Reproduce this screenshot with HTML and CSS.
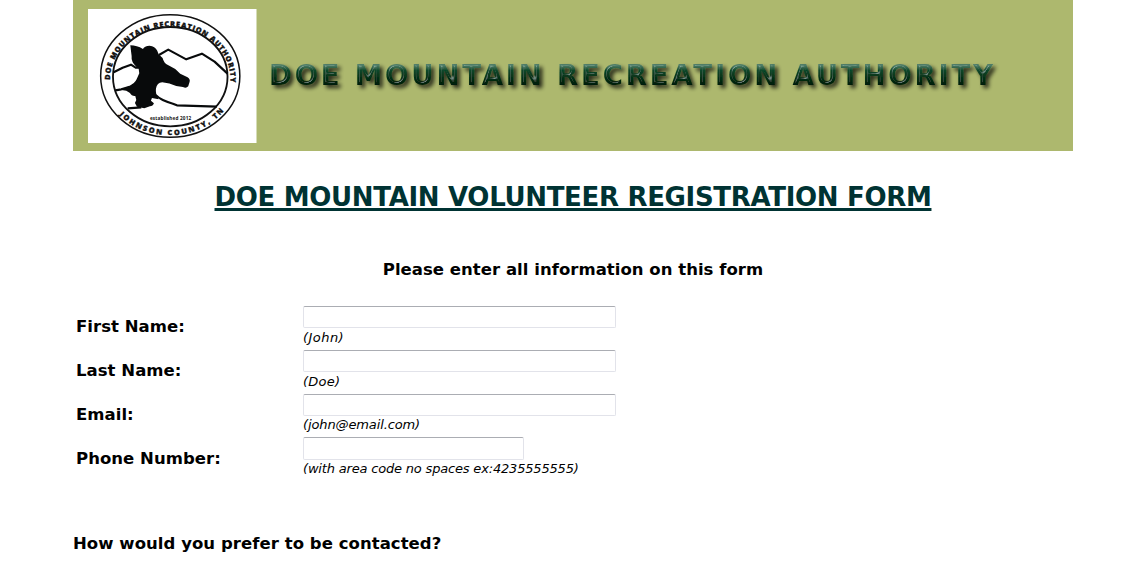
FILE: index.html
```html
<!DOCTYPE html>
<html lang="en">
<head>
<meta charset="utf-8">
<title>Doe Mountain Volunteer Registration</title>
<link rel="stylesheet" href="styles.css">
</head>
<body>
<div class="page">
  <header class="banner">
    <svg class="logo" viewBox="45 27 506 402" preserveAspectRatio="none" role="img" aria-label="Doe Mountain Recreation Authority seal">
      <defs>
        <path id="arc-top" d="M111 240 A181 160 0 1 1 473 240 L473 262"/>
        <path id="arc-bottom" d="M139 344 A200 177 0 0 0 451 335"/>
      </defs>
      <rect x="45" y="27" width="506" height="402" fill="#fff"/>
      <g fill="none" stroke="#111" stroke-width="4.5">
        <ellipse cx="292" cy="228" rx="209" ry="184"/>
        <ellipse cx="292" cy="230" rx="172" ry="149" stroke-width="5.5"/>
      </g>
      <g fill="none" stroke="#080a0b" stroke-width="6.5" stroke-linejoin="round">
        <path d="M122 217 L149 203 L174 194 L188 203 L200 203"/>
        <path d="M258 165 L286 149 L340 178 L387 161 L425 185 L464 221"/>
        <path d="M127 271 L145 268 L170 260"/>
        <path d="M248 285 Q262 300 300 311 L312 316 L432 320"/>
        <path d="M164 325 L205 322"/>
      </g>
      <path fill="#080a0b" d="M172 136 Q192 136 210 147 Q214 138 230 137 Q246 138 253 152 L257 163 L269 174 Q273 190 285 195 L307 207 L322 221 L344 232 Q353 238 350 246 L346 259 Q340 266 330 261 L310 258 Q290 249 268 247 Q252 248 249 266 Q247 282 257 298 L237 294 L234 302 L243 310 Q240 319 231 319 L214 325 L192 320 L186 309 L190 300 L187 288 Q176 289 171 279 L160 272 L140 269 L165 260 Q187 249 191 238 L199 220 L197 205 L190 200 Q174 186 176 168 Z"/>
      <g class="seal-text">
        <text class="seal-ring" font-size="22"><textPath href="#arc-top" textLength="543">DOE MOUNTAIN RECREATION AUTHORITY</textPath></text>
        <text class="seal-ring" font-size="22"><textPath href="#arc-bottom" textLength="352">JOHNSON COUNTY, TN</textPath></text>
        <text class="established" x="231" y="359" font-size="14" textLength="124">established 2012</text>
      </g>
    </svg>
    <svg class="wordmark" viewBox="0 0 740 50" role="img" aria-label="Doe Mountain Recreation Authority">
      <defs>
        <linearGradient id="bevel" x1="0" y1="0" x2="0" y2="1">
          <stop offset="0.2" stop-color="#4f7c66"/>
          <stop offset="0.36" stop-color="#11472a"/>
          <stop offset="0.58" stop-color="#053217"/>
          <stop offset="0.8" stop-color="#001e07"/>
        </linearGradient>
        <filter id="emboss" x="-2%" y="-20%" width="104%" height="160%">
          <feGaussianBlur in="SourceAlpha" stdDeviation="1.1" result="soft"/>
          <feSpecularLighting in="soft" surfaceScale="3" specularConstant="0.4" specularExponent="18" lighting-color="#b8d8d0" result="shine">
            <feDistantLight azimuth="240" elevation="35"/>
          </feSpecularLighting>
          <feComposite in="shine" in2="SourceAlpha" operator="in" result="edge"/>
          <feGaussianBlur in="SourceAlpha" stdDeviation="2"/>
          <feOffset dx="3" dy="3" result="cast"/>
          <feComponentTransfer in="cast" result="shadow"><feFuncA type="linear" slope="0.8"/></feComponentTransfer>
          <feMerge>
            <feMergeNode in="shadow"/>
            <feMergeNode in="SourceGraphic"/>
            <feMergeNode in="edge"/>
          </feMerge>
        </filter>
      </defs>
      <text class="wordmark-text" x="6" y="35" textLength="724" fill="url(#bevel)" filter="url(#emboss)">DOE MOUNTAIN RECREATION AUTHORITY</text>
    </svg>
  </header>

  <h1 class="title">DOE MOUNTAIN VOLUNTEER REGISTRATION FORM</h1>
  <p class="intro">Please enter all information on this form</p>

  <form class="fields">
    <label class="label" for="first">First Name:</label>
    <div class="field"><input class="input" id="first" type="text"><span class="hint hint-john">(John)</span></div>
    <label class="label" for="last">Last Name:</label>
    <div class="field"><input class="input" id="last" type="text"><span class="hint hint-doe">(Doe)</span></div>
    <label class="label" for="email">Email:</label>
    <div class="field"><input class="input" id="email" type="text"><span class="hint hint-email">(john@email.com)</span></div>
    <label class="label label-phone" for="phone">Phone Number:</label>
    <div class="field"><input class="input input-short" id="phone" type="text"><span class="hint hint-phone">(with area code no spaces ex:4235555555)</span></div>
  </form>

  <p class="question">How would you prefer to be contacted?</p>
</div>
</body>
</html>
```
FILE: styles.css
```css
* { box-sizing: border-box; }
html { overflow: hidden; }
body {
  margin: 0;
  background: #fff;
  color: #000;
  font-family: Verdana, "DejaVu Sans", sans-serif;
}
.page { width: 1000px; margin-left: 73px; }
.banner {
  display: flex;
  height: 151px;
  padding: 9px 0 0 15px;
  background: #adb86e;
}
.logo { width: 168.5px; height: 134px; flex: none; }
.seal-text { font-family: "Open Sans", sans-serif; font-weight: 800; fill: #111; }
.seal-ring { stroke: #111; stroke-width: 1; }
.established { font-weight: 700; }
.wordmark { width: 740px; height: 50px; margin: 41px 0 0 6.5px; flex: none; }
.wordmark-text { font: 700 27.5px "DejaVu Sans", sans-serif; }
.title {
  margin: 30px 0 0;
  line-height: 32px;
  font-size: 26px;
  text-align: center;
  white-space: nowrap;
  color: #033;
  text-decoration: underline;
  text-decoration-thickness: 3px;
  text-underline-offset: 2px;
  letter-spacing: -0.32px;
}
.intro {
  margin: 47px 0 0;
  line-height: 20px;
  font-size: 16.5px;
  font-weight: 700;
  letter-spacing: 0.03px;
  text-align: center;
}
.fields {
  display: grid;
  grid-template-columns: 227px 1fr;
  grid-template-rows: 44px 44px 43px 44px;
  margin: 26px 0 0;
  padding-left: 3px;
}
.label { padding-top: 11px; font-size: 16.5px; font-weight: 700; line-height: 20px; letter-spacing: 0.04px; }
.label-phone { padding-top: 12px; }
.field { display: flex; flex-direction: column; align-items: flex-start; }
.input {
  width: 313px;
  height: 22px;
  padding: 1px 3px;
  border: 1px solid #e2e3ea;
  border-top-color: #abadb3;
  border-radius: 2px;
  background: #fff;
}
.input-short { width: 221px; height: 23px; }
.hint { font-size: 13px; font-style: italic; line-height: 18px; white-space: nowrap; }
.hint-john { line-height: 20px; letter-spacing: 0.45px; }
.hint-doe { line-height: 20px; letter-spacing: 0.25px; }
.hint-email { letter-spacing: -0.12px; }
.hint-phone { letter-spacing: -0.18px; }
.question { margin: 53px 0 0; font-size: 16.5px; font-weight: 700; line-height: 20px; letter-spacing: 0.05px; }
```
